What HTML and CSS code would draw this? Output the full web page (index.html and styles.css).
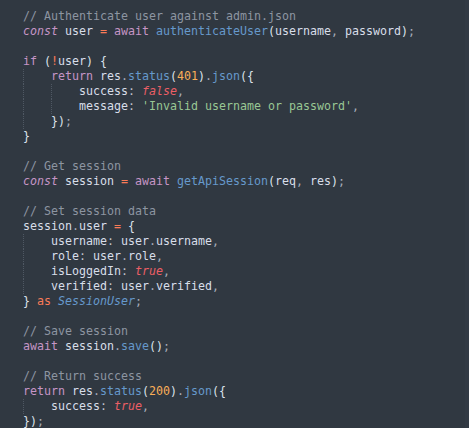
FILE: index.html
```html
<!DOCTYPE html>
<html lang="en">
<head>
<meta charset="utf-8">
<title>Code</title>
<link rel="stylesheet" href="styles.css">
</head>
<body>
<div class="editor">
<div class="code">
<div class="ln"><span class="c">// Authenticate user against admin.json</span></div>
<div class="ln"><span class="st">const</span> user <span class="op">=</span> <span class="kw">await</span> <span class="fn">authenticateUser</span><span class="p">(</span>username<span class="pm">,</span> password<span class="p">)</span><span class="pm">;</span></div>
<div class="ln"> </div>
<div class="ln"><span class="kw">if</span> <span class="p">(</span><span class="op">!</span>user<span class="p">)</span> <span class="p">{</span></div>
<div class="ln"><span class="ig"></span><span class="kw">return</span> res<span class="pm">.</span><span class="fn">status</span><span class="p">(</span><span class="num">401</span><span class="p">)</span><span class="pm">.</span><span class="fn">json</span><span class="p">({</span></div>
<div class="ln"><span class="ig"></span><span class="ig"></span>success<span class="pc">:</span> <span class="bool">false</span><span class="pm">,</span></div>
<div class="ln"><span class="ig"></span><span class="ig"></span>message<span class="pc">:</span> <span class="str">'Invalid username or password'</span><span class="pm">,</span></div>
<div class="ln"><span class="ig"></span><span class="p">})</span><span class="pm">;</span></div>
<div class="ln"><span class="p">}</span></div>
<div class="ln"> </div>
<div class="ln"><span class="c">// Get session</span></div>
<div class="ln"><span class="st">const</span> session <span class="op">=</span> <span class="kw">await</span> <span class="fn">getApiSession</span><span class="p">(</span>req<span class="pm">,</span> res<span class="p">)</span><span class="pm">;</span></div>
<div class="ln"> </div>
<div class="ln"><span class="c">// Set session data</span></div>
<div class="ln">session<span class="pm">.</span>user <span class="op">=</span> <span class="p">{</span></div>
<div class="ln"><span class="ig"></span>username<span class="pc">:</span> user<span class="pm">.</span>username<span class="pm">,</span></div>
<div class="ln"><span class="ig"></span>role<span class="pc">:</span> user<span class="pm">.</span>role<span class="pm">,</span></div>
<div class="ln"><span class="ig"></span>isLoggedIn<span class="pc">:</span> <span class="bool">true</span><span class="pm">,</span></div>
<div class="ln"><span class="ig"></span>verified<span class="pc">:</span> user<span class="pm">.</span>verified<span class="pm">,</span></div>
<div class="ln"><span class="p">}</span> <span class="op">as</span> <span class="ty">SessionUser</span><span class="pm">;</span></div>
<div class="ln"> </div>
<div class="ln"><span class="c">// Save session</span></div>
<div class="ln"><span class="kw">await</span> session<span class="pm">.</span><span class="fn">save</span><span class="p">()</span><span class="pm">;</span></div>
<div class="ln"> </div>
<div class="ln"><span class="c">// Return success</span></div>
<div class="ln"><span class="kw">return</span> res<span class="pm">.</span><span class="fn">status</span><span class="p">(</span><span class="num">200</span><span class="p">)</span><span class="pm">.</span><span class="fn">json</span><span class="p">({</span></div>
<div class="ln"><span class="ig"></span>success<span class="pc">:</span> <span class="bool">true</span><span class="pm">,</span></div>
<div class="ln"><span class="p">})</span><span class="pm">;</span></div>
</div>
</div>
</body>
</html>
```
FILE: styles.css
```css
html, body {
  margin: 0;
  padding: 0;
  background: #303841;
  height: 100%;
  overflow: hidden;
}

.editor {
  height: 100%;
  padding: 9px 0 0 23px;
  box-sizing: border-box;
  box-shadow: inset -4px 0 0 #323a44;
}

.code {
  font-family: "DejaVu Sans Mono", monospace;
  font-size: 11.63px;
  line-height: 15px;
  color: #d8dee9;
}

.ln {
  height: 15px;
  white-space: pre;
}

.ig {
  display: inline-block;
  width: 28px;
  height: 15px;
  vertical-align: top;
  box-sizing: border-box;
  border-left: 1px dotted #4f5863;
}

.c { color: #8d95a1; }
.st { color: #c695c6; font-style: italic; }
.kw { color: #c695c6; }
.op { color: #f97b58; }
.fn { color: #6699cc; }
.p { color: #dde3ec; }
.pm { color: #a6acb9; }
.pc { color: #c0c5ce; }
.num { color: #f9ae58; }
.str { color: #99c794; }
.bool { color: #ec5f66; font-style: italic; }
.ty { color: #6699cc; font-style: italic; }
```
